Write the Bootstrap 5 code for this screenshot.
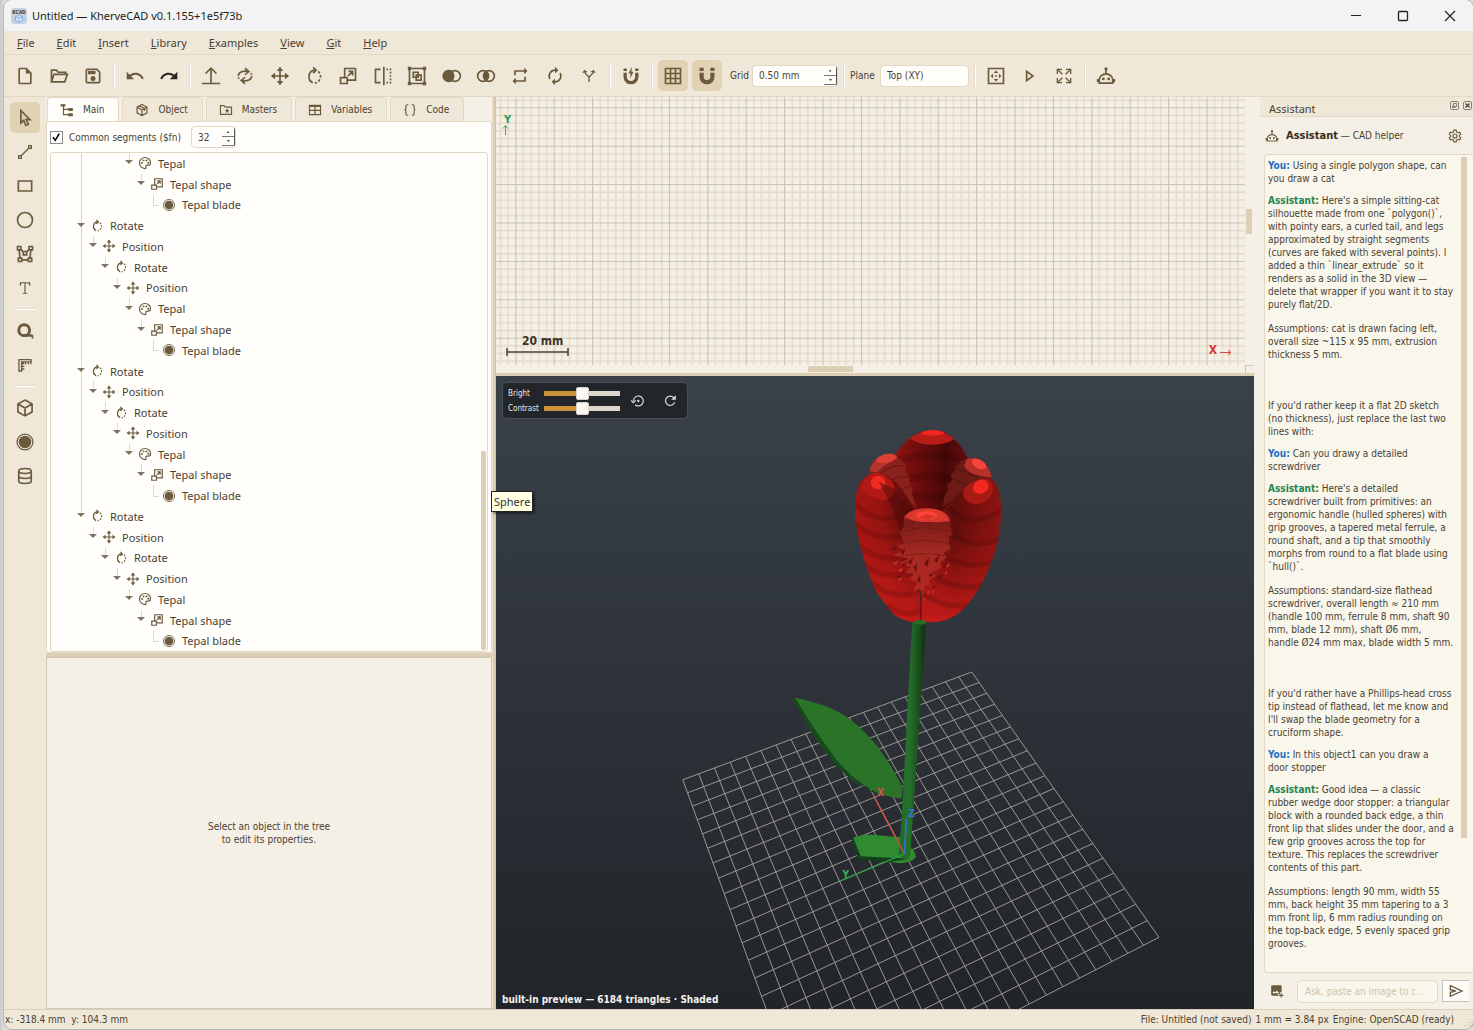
<!DOCTYPE html>
<html lang="en">
<head>
<meta charset="utf-8">
<meta name="viewport" content="width=device-width, initial-scale=1">
<title>Untitled — KherveCAD v0.1.155+1e5f73b</title>
<link href="https://cdn.jsdelivr.net/npm/bootstrap@5.3.0/dist/css/bootstrap.min.css" rel="stylesheet">
<style>
:root{--ink:#4a4132;--ico:#6b5a3c;--bar:#efe7d8;--paper:#f5f0e6;--white:#fffefa;--line:#e2d8c3;--tan:#dccfb6;--on:#e1d2b4;
--ui:"Noto Sans","Open Sans",sans-serif;--sm:"DejaVu Sans Condensed","DejaVu Sans",sans-serif}
html,body{height:100%}
body{margin:0;background:linear-gradient(90deg,#c9c9c9,#dedede 4px);font-family:var(--sm);font-size:10px;line-height:13px;color:var(--ink);overflow:hidden}
.app-win{margin-left:4px;height:calc(100vh - 1px);border-radius:8px;box-shadow:0 0 0 1px #b4b4b4;overflow:hidden;background:var(--bar)}
svg.ic{display:block;width:20px;height:20px;fill:currentColor;color:var(--ico);flex:none}
svg.ic.s14{width:14px;height:14px}
svg.ic.s16{width:16px;height:16px}
svg.ic.redo{color:#2b261c}
.ln{fill:none;stroke:currentColor;stroke-width:2}
button{border:0;background:none;padding:0;color:inherit;font:inherit}
.titlebar{height:31px;background:#f3f3f3;font-family:var(--ui);font-size:11px;color:#1d1d1d;padding:0 16px 0 7px;gap:5px}
.titlebar svg{display:block}
.winbtns{gap:33px}
.menubar{height:24px;font-family:var(--ui);font-size:11px;border-bottom:1px solid #e3d9c6;padding-left:13px;gap:22px}
.menubar a{color:var(--ink);text-decoration:none}
.toolbar{height:42px;border-bottom:1px solid var(--line);padding-left:6px}
.tb{width:30px;height:31px;border-radius:5px;display:flex;align-items:center;justify-content:center}
.tb.on{background:var(--on)}
.tsep{width:12px;height:24px;display:flex;justify-content:center}
.tsep::before{content:"";width:1px;background:#fff;border-left:1px solid #e5dccb;box-sizing:content-box}
.edit-group{width:408px}
.lb-grid{width:22px}
.lb-plane{width:30px}
.fieldbox{background:var(--white);border:1px solid var(--line);border-radius:4px;height:22px;display:flex;align-items:center;overflow:hidden;width:86px}
.fieldbox.seg{width:45px}
.fieldbox.plane{width:89px}
.fieldbox input,.fieldbox select{border:0;background:none;width:100%;min-width:0;padding:0 0 0 6px;font:inherit;color:inherit;outline:0;appearance:none}
.spin{width:13px;flex:none;display:flex;flex-direction:column;align-self:stretch;padding:1px 0;border-right:1px solid #555}
.spin button{flex:1;display:flex;align-items:center;justify-content:center;border-bottom:1px solid #777}
.spin i{width:3px;height:2px;background:#444;clip-path:polygon(50% 0,100% 100%,0 100%)}
.spin button+button i{transform:rotate(180deg)}
.rail{width:42px;padding:5px 6px;gap:3px}
.rail .hsep{height:1px;background:#fff;border-top:1px solid #e5dccb;box-sizing:content-box;margin:2px 4px}
.leftpane{width:446px;background:var(--paper)}
.doc-tabs{height:24px;gap:3px;padding-left:1px}
.doc-tabs button{background:var(--bar);border:1px solid var(--line);border-bottom:0;border-radius:4px 4px 0 0;display:flex;align-items:center;padding:0 14px 0 12px;gap:9px}
.doc-tabs button.on{background:var(--white)}
.tree-pane{flex:557 1 0;min-height:0}
.props{flex:350 1 0;min-height:0;border:1px solid #cfc8b8;background:var(--paper)}
.tabbody{background:var(--white);border:1px solid var(--line);border-radius:0 3px 3px 3px;padding:0 3px}
.segrow{height:30px;gap:6px;padding-left:0}
.segrow input[type=checkbox]{appearance:none;width:13px;height:13px;border:1px solid #8e8e8e;background:#fff url('data:image/svg+xml,<svg xmlns="http://www.w3.org/2000/svg" viewBox="0 0 13 13"><path d="M2.5 6.2 5 9.8 9.8 1.8" fill="none" stroke="black" stroke-width="1.8"/></svg>') center/11px no-repeat;margin:0}
.treebox{border:1px solid var(--line);border-radius:3px;position:relative;min-height:0}
.tree{list-style:none;margin:0;padding:0;font-family:var(--ui);font-size:11px}
.tree li{flex:1 1 0;min-height:0;display:flex;align-items:center;padding-left:calc(24px + var(--lv)*12px);position:relative}
.tree li .tw{width:12px;height:100%;flex:none;position:relative;margin-right:3px}
.tree li .tw::before{content:"";position:absolute;left:6px;top:0;bottom:50%;border-left:1px solid #d8d8da}
.tree li .tw::after{content:"";position:absolute;left:2px;top:calc(50% - 3px);border:4px solid transparent;border-top-color:#7d7466;border-bottom:0}
.tree li.leaf .tw::after{border:0;left:6px;top:50%;width:6px;border-top:1px solid #d8d8da}
.tree li::before{content:"";position:absolute;left:30px;top:0;bottom:0;border-left:1px solid #d4d4d6}
.tree li.end::before{bottom:50%}
.tree li.tail::before{display:none}
.tree svg.ic{margin-right:6px}
.tree-thumb{position:absolute;right:1px;bottom:1px;width:5px;height:40%;background:var(--tan)}
.hsplit{height:4px;background:var(--tan);flex:none}
.hsplit.thin{height:3px}
.vsplit{width:4px;background:linear-gradient(90deg,#e9dfcc 1px,var(--tan) 1px 3px,#c6b99f);flex:none}
.views{background:var(--paper)}
.v2{flex:276 1 0;min-height:0}
.v3{flex:632 1 0;min-height:0;position:relative;background:linear-gradient(#3a4149,#212429);overflow:hidden}
.canvas2d{position:relative}
.canvas2d svg.paper{position:absolute;inset:0;width:100%;height:100%}
.lab{position:absolute;font-weight:700}
.mk{position:absolute}
.mk-y{left:5px;top:27px}
.mk-s{left:10px;bottom:8px}
.mk-x{right:12px;bottom:8px}
.lab-y{left:8px;top:16px;color:#2ca04c;font-size:11px}
.lab-s{left:26px;bottom:17px;font-size:12px;color:#3a3226}
.lab-x{right:28px;bottom:8px;color:#d8363a;font-size:12px}
.vs{width:9px;padding:112px 2px 0 1px}
.vs div{height:25px;background:var(--tan)}
.hs{height:8px}
.hs .thumb{width:45px;height:6px;background:var(--tan);margin:1px 0 1px 312px}
.hs .crn{width:9px;border:1px solid #cfc8b8;border-right:0;border-bottom:0}
.scene{position:absolute;inset:0;width:100%;height:100%}
.hud{position:absolute;left:6px;top:6px;width:186px;height:37px;background:#22262b;border:1px solid #4a4f55;border-radius:5px;color:#e8e8e8;font-size:8px;padding:2px 6px 2px 5px;display:flex;align-items:center}
.hud label{width:36px}
.hud svg.ic{color:#dcdcdc}
.hud .sl{display:flex;align-items:center;height:15px}
.hud input{appearance:none;width:76px;height:5px;margin:0;background:linear-gradient(90deg,#c8913a 50%,#ddd6cb 50%);display:block}
.hud input::-webkit-slider-thumb{appearance:none;width:13px;height:13px;background:#fbf8f4;border:1px solid #d8d2c8;border-radius:2px}
.hud .btns{gap:18px;margin-right:4px}
.note3{left:6px;bottom:3px;color:#f2f2f2}
.chat{width:219px;background:var(--paper);padding-left:6px}
.dockhead{height:20px;background:var(--bar);border-bottom:1px solid var(--line);font-family:var(--ui);font-size:11px;line-height:15px;padding:4px 1px 0 9px}
.dockhead svg{display:block}
.chathead{height:37px;padding:0 11px 0 5px;gap:7px}
.chathead b{font-size:11px;color:#352d20}
.log{margin-left:4px;background:#f9f6ec;border:1px solid var(--line);border-right:0;border-radius:4px 0 0 4px;padding:4px 0 0 3px;position:relative;overflow:hidden}
.log p{margin:0 0 9px;white-space:nowrap}
.log p.cont{margin-bottom:11px}
.log p.brk{margin-bottom:38px}
.log .you{color:#1f6fc6}
.log .bot{color:#23854c}
.log-thumb{position:absolute;right:6px;top:2px;width:6px;height:681px;background:var(--tan)}
.askrow{height:36px;padding:0 4px 0 10px}
.askrow input{border:1px solid var(--line);border-radius:5px;background:#f9f6ec;height:23px;width:141px;padding:0 7px;font:inherit;outline:0}
.askrow input::placeholder{color:#cfc3a8;opacity:1}
.send{width:27px;height:22px;background:#fcfbf8;border:1px solid #c8c4bb;border-right:0;display:flex;align-items:center;justify-content:center}
.status{height:20px;border-top:1px solid #d8cfbd;padding:0 19px 0 1px;position:relative}
.status::after{content:"";position:absolute;right:1px;bottom:2px;width:9px;height:9px;background:radial-gradient(#b9b0a0 1px,transparent 1px) 0 0/3px 3px;clip-path:polygon(100% 0,100% 100%,0 100%)}
.tipbox{position:absolute;left:491px;top:491px;background:#ffffe1;border:1px solid #222;box-shadow:2px 2px 2px rgba(0,0,0,.4);font-family:var(--ui);font-size:11px;color:#333;height:21px;line-height:19px;padding:0 2px;z-index:5}
</style>
<script src="https://cdn.jsdelivr.net/npm/bootstrap@5.3.0/dist/js/bootstrap.bundle.min.js"></script>
</head>
<body>
<svg class="d-none">
<symbol id="new" viewBox="0 0 24 24"><path d="M14 2H6a2 2 0 0 0-2 2v16c0 1.100.900 2 2 2h12a2 2 0 0 0 2-2V8zM6 20V4h7v5h5v11z"/></symbol>
<symbol id="open" viewBox="0 0 24 24"><path class="ln" d="M3 19V5h6l2 2.500h9V10M3 19l3-9h16l-3 9z"/></symbol>
<symbol id="save" viewBox="0 0 24 24"><path fill-rule="evenodd" d="M17 3H5a2 2 0 0 0-2 2v14c0 1.100.900 2 2 2h14a2 2 0 0 0 2-2V7zm2 16H5V5h11.170L19 7.830zM6 6h9v4H6zM12 12a3 3 0 1 0 0 6 3 3 0 0 0 0-6z"/></symbol>
<symbol id="undo" viewBox="0 0 24 24"><path d="M12.500 8c-2.650 0-5.050.990-6.900 2.600L2 7v9h9l-3.620-3.620a8 8 0 0 1 12.720 3.620l2.370-.780C21.080 11.030 17.150 8 12.500 8z"/></symbol>
<symbol id="redo" viewBox="0 0 24 24"><path transform="matrix(-1 0 0 1 24 0)" d="M12.500 8c-2.650 0-5.050.990-6.900 2.600L2 7v9h9l-3.620-3.620a8 8 0 0 1 12.720 3.620l2.370-.780C21.080 11.030 17.150 8 12.500 8z"/></symbol>
<symbol id="extrude" viewBox="0 0 24 24"><path class="ln" d="M1 21h22M12 20V3M5.500 9 12 2.500 18.500 9"/></symbol>
<symbol id="revolve" viewBox="0 0 24 24"><path class="ln" d="M4 12C4 7.500 9 5.500 16 6.500M12 2.500l4.500 4-4.500 4M20 12c0 4.500-5 6.500-12 5.500M12 21.500l-4.500-4 4.500-4"/><path class="ln" stroke-dasharray="2 1.500" d="M4 13.500c.3 1.500 1 2.300 2.300 3M20 10.500c-.3-1.500-1-2.300-2.300-3"/></symbol>
<symbol id="move" viewBox="0 0 24 24"><path class="ln" d="M12 3v18M3 12h18"/><path d="M12 1l4 5H8zM12 23l4-5H8zM1 12l5-4v8zM23 12l-5-4v8z"/></symbol>
<symbol id="rotate" viewBox="0 0 24 24"><path class="ln" d="M10.500 20A8 8 0 0 1 12 5h2M11 1.500 14.500 5 11 8.500"/><path class="ln" stroke-dasharray="3 2.200" d="M17 6.500a8 8 0 0 1-4 14"/></symbol>
<symbol id="scale" viewBox="0 0 24 24"><path class="ln" d="M8 14V3h13v14H11M3 14h8v7H3zM12 12l5-5M12.500 6.500H17.500V11.500"/></symbol>
<symbol id="mirror" viewBox="0 0 24 24"><path class="ln" d="M9 4H3v16h6M13 1v22"/><path class="ln" stroke-dasharray="2 2" d="M16 4h5v16h-6"/></symbol>
<symbol id="group" viewBox="0 0 24 24"><path class="ln" d="M3 3h18v18H3zM7.500 7.500h6v6h-6zM11 11h6v6h-6z"/><path d="M1 1h4v4H1zM19 1h4v4h-4zM1 19h4v4H1zM19 19h4v4h-4z"/></symbol>
<symbol id="diff" viewBox="0 0 24 24"><path d="M8.500 4.500C10 4.500 11 5 12 5.700a8 8 0 0 0 0 12.600 7.500 7.500 0 1 1-3.500-13.800z"/><path d="M12 5.700a8 8 0 0 1 0 12.600 8 8 0 0 1 0-12.600z"/><circle class="ln" cx="15.500" cy="12" r="6.500"/></symbol>
<symbol id="inter" viewBox="0 0 24 24"><circle class="ln" cx="8.500" cy="12" r="6.500"/><circle class="ln" cx="15.500" cy="12" r="6.500"/><path d="M12 6a7 7 0 0 1 0 12 7 7 0 0 1 0-12z"/></symbol>
<symbol id="loop" viewBox="0 0 24 24"><path d="M7 7h10v3l4-4-4-4v3H5v6h2zM17 17H7v-3l-4 4 4 4v-3h12v-6h-2z"/></symbol>
<symbol id="renew" viewBox="0 0 24 24"><path d="M12 6v3l4-4-4-4v3a8 8 0 0 0-6.760 12.260L6.700 14.800A6 6 0 0 1 12 6zm6.760 1.740L17.300 9.200A6 6 0 0 1 12 18v-3l-4 4 4 4v-3a8 8 0 0 0 6.760-12.260z"/></symbol>
<symbol id="split" viewBox="0 0 24 24"><path class="ln" d="M12 21v-6.500c0-2-6.500-6-6.500-9M12 14.500c0-2 6.500-6 6.500-9"/><path d="M2 7.500 5 2.500l5 3.500zM22 7.500l-3-5-5 3.500z"/></symbol>
<symbol id="magnet" viewBox="0 0 24 24"><path d="M3 8h5v5a4 4 0 0 0 8 0V8h5v5a9 9 0 0 1-18 0zM3 2h5v4H3zM16 2h5v4h-5z"/></symbol>
<symbol id="bolt" viewBox="0 0 24 24"><path d="M3 8h4v5a5 5 0 0 0 10 0V8h4v5a9 9 0 0 1-18 0zM3 3h4v3H3zM17 3h4v3h-4zM13 1 9 9h2.500L11 15l4-8h-2.500z"/></symbol>
<symbol id="grid" viewBox="0 0 24 24"><path class="ln" d="M3 3h18v18H3zM9 3v18M15 3v18M3 9h18M3 15h18"/></symbol>
<symbol id="fit" viewBox="0 0 24 24"><path class="ln" d="M3 3h18v18H3z"/><path d="M12 5.500l2.800 3H9.200zM12 18.500l2.800-3H9.200zM5.500 12l3-2.800v5.600zM18.500 12l-3-2.800v5.600zM11 11h2v2h-2z"/></symbol>
<symbol id="play" viewBox="0 0 24 24"><path class="ln" d="M8 6.500v11l7.500-5.500z"/></symbol>
<symbol id="full" viewBox="0 0 24 24"><path class="ln" stroke-width="2.400" d="M2 9V2h7M2 2l7.500 7.500M15 2h7v7M22 2l-7.500 7.500M2 15v7h7M2 22l7.500-7.500M22 15v7h-7M22 22l-7.500-7.500"/></symbol>
<symbol id="robot" viewBox="0 0 24 24"><path class="ln" d="M4 20.500v-4a8 7 0 0 1 16 0v4zM12 9V5M2 15.500v4M22 15.500v4"/><circle cx="12" cy="3.500" r="2"/><circle cx="8.800" cy="15.500" r="1.700"/><circle cx="15.200" cy="15.500" r="1.700"/></symbol>
<symbol id="cursor" viewBox="0 0 24 24"><path class="ln" d="M7 3v15l3.500-3 2.500 6 3-1.300-2.600-5.700H18z"/></symbol>
<symbol id="line" viewBox="0 0 24 24"><path class="ln" d="M2.500 17.500h4v4h-4zM17.500 2.500h4v4h-4zM7 17 17 7"/></symbol>
<symbol id="rect" viewBox="0 0 24 24"><path class="ln" d="M4 6h16v12H4z"/></symbol>
<symbol id="circ" viewBox="0 0 24 24"><circle class="ln" cx="12" cy="12" r="9"/></symbol>
<symbol id="poly" viewBox="0 0 24 24"><path class="ln" d="M3 3h4v4H3zM17 3h4v4h-4zM4 17h4v4H4zM16 17h4v4h-4zM10 9h4v4h-4zM5 7l1 10M19 7l-1 10M8 19h8M7 6l3 4M17 6l-3 4"/></symbol>
<symbol id="txt" viewBox="0 0 24 24"><path d="M3 2h18v6h-1.500L18 4h-5v16l3 .500V22H8v-1.500l3-.5V4H6L4.500 8H3z"/></symbol>
<symbol id="tape" viewBox="0 0 24 24"><circle cx="11" cy="11" r="6.500" fill="none" stroke="currentColor" stroke-width="3.500"/><path d="M7 16h14v1h1v4h-2v-2H9z"/></symbol>
<symbol id="ruler" viewBox="0 0 24 24"><path d="M2 3h20v8h-2V8h-2v3h-2V8h-2v3h-2V8h-1v3H8v2h3v2H8v2h3v2H8v3H2z"/><path fill="#efe7d8" d="M4 5h16v1.200H6V20H4z"/></symbol>
<symbol id="cube" viewBox="0 0 24 24"><path class="ln" d="M12 2.500l8.500 4.700v9.600L12 21.500l-8.500-4.700V7.200zM3.500 7.200 12 12l8.500-4.800M12 12v9.500"/></symbol>
<symbol id="box" viewBox="0 0 24 24"><path class="ln" d="M12 2.500l8.500 4.700v9.600L12 21.500l-8.500-4.700V7.200zM3.500 7.200 12 12l8.500-4.800M12 12v9.500M8 5l8.500 4.700v4"/></symbol>
<symbol id="sphere" viewBox="0 0 24 24"><circle cx="12" cy="12" r="7.500"/><circle cx="12" cy="12" r="9.500" fill="none" stroke="currentColor" stroke-width="1.500"/></symbol>
<symbol id="cyl" viewBox="0 0 24 24"><ellipse class="ln" cx="12" cy="6" rx="7.500" ry="3"/><path class="ln" d="M4.500 6v12c0 4 15 4 15 0V6M4.500 12c0 4 15 4 15 0"/></symbol>
<symbol id="palette" viewBox="0 0 24 24"><path class="ln" d="M12 2.500a9.500 9.500 0 0 0 0 19c2 0 2.300-1.500 1.500-2.700-.8-1.500 0-3.300 2-3.300h2.500c2 0 3.500-1.500 3.500-4 0-5-4.200-9-9.500-9z"/><circle cx="6.800" cy="12" r="1.700"/><circle cx="9.500" cy="7.500" r="1.700"/><circle cx="14.500" cy="7.500" r="1.700"/><circle cx="17.500" cy="11.500" r="1.700"/></symbol>
<symbol id="treei" viewBox="0 0 24 24"><path class="ln" d="M2 4h7M6 4v16h8M6 11h8"/><path d="M1 2h8v4H1zM14 8.500h8v5h-8zM14 17.500h8v5h-8z"/></symbol>
<symbol id="star" viewBox="0 0 24 24"><path class="ln" d="M2.500 19.500v-15h6l2.500 2.500h10.500v12.500z"/><path d="M14 9l1.300 3H18l-2.200 2 .8 3-2.600-1.600L11.400 17l.8-3L10 12h2.700z"/></symbol>
<symbol id="table" viewBox="0 0 24 24"><path class="ln" d="M2.500 4h19v16h-19zM2.500 6h19M2.500 12.500h19M12 5v15"/></symbol>
<symbol id="braces" viewBox="0 0 24 24"><path class="ln" d="M9 3H7Q5 3 5 5v4.500Q5 12 2.500 12 5 12 5 14.500V19q0 2 2 2h2M15 3h2q2 0 2 2v4.500q0 2.500 2.500 2.500-2.500 0-2.500 2.500V19q0 2-2 2h-2"/></symbol>
<symbol id="gear" viewBox="0 0 24 24"><path class="ln" d="M10 2h4l.7 3 2.200 1.300 3-.9 2 3.500-2.300 2.100v2l2.300 2.100-2 3.500-3-.9-2.200 1.300-.7 3h-4l-.7-3-2.200-1.300-3 .9-2-3.500L4.400 13v-2L2.100 8.900l2-3.500 3 .9L9.300 5z"/><circle class="ln" cx="12" cy="12" r="3.500"/></symbol>
<symbol id="img" viewBox="0 0 24 24"><path fill-rule="evenodd" d="M4 2h14q2 0 2 2v10h-3v3h-3v3H4q-2 0-2-2V4q0-2 2-2zM4 16h12l-4-5-3 3.500-2-2.300zM18 16h2v2.500h3v2h-3V23h-2v-2.500h-3v-2h3z"/></symbol>
<symbol id="sendi" viewBox="0 0 24 24"><path class="ln" d="M3.500 4 21 12 3.500 20V14l8-2-8-2z"/></symbol>
<symbol id="rst" viewBox="0 0 24 24"><path class="ln" d="M4 12a8.500 8.500 0 1 1 3 6.500M0 11l4 4 4-4"/><circle cx="12.500" cy="12" r="2"/></symbol>
<symbol id="rld" viewBox="0 0 24 24"><path class="ln" d="M20 14a8 8 0 1 1-2-8l2 2"/><path d="M22 2v8h-8z"/></symbol>
</svg>

<div class="app-win d-flex flex-column">
<header class="titlebar d-flex align-items-center flex-shrink-0">
<svg width="16" height="16" viewBox="0 0 16 16"><rect width="16" height="16" rx="3" fill="#c6d2e0"/><text x="8" y="5.500" font-size="5" font-weight="700" text-anchor="middle" fill="#333">KCAD</text><path d="M8 7l3.500 1.800v3.600L8 14.500l-3.500-2.100V8.800zM4.500 8.800 8 10.500l3.500-1.700M8 10.500v4" fill="#dcecff" stroke="#6ea3dc" stroke-width=".8"/></svg>
<span>Untitled — KherveCAD v0.1.155+1e5f73b</span>
<div class="ms-auto d-flex winbtns">
<button aria-label="Minimize"><svg width="14" height="14"><path d="M2 6.500h10" stroke="#222"/></svg></button>
<button aria-label="Maximize"><svg width="14" height="14"><rect x="2.500" y="2.500" width="9" height="9" rx="1" fill="none" stroke="#222" stroke-width="1.300"/></svg></button>
<button aria-label="Close"><svg width="14" height="14"><path d="M2 2l10 10M12 2 2 12" stroke="#222" stroke-width="1.200"/></svg></button>
</div>
</header>
<nav class="menubar d-flex align-items-center flex-shrink-0">
<a href="#"><u>F</u>ile</a><a href="#"><u>E</u>dit</a><a href="#"><u>I</u>nsert</a><a href="#"><u>L</u>ibrary</a><a href="#"><u>E</u>xamples</a><a href="#"><u>V</u>iew</a><a href="#"><u>G</u>it</a><a href="#"><u>H</u>elp</a>
</nav>
<div class="toolbar d-flex align-items-center flex-shrink-0">
<div class="d-flex gap-1">
<button class="tb" aria-label="New"><svg class="ic"><use href="#new"/></svg></button>
<button class="tb" aria-label="Open"><svg class="ic"><use href="#open"/></svg></button>
<button class="tb" aria-label="Save"><svg class="ic"><use href="#save"/></svg></button>
</div><span class="tsep"></span>
<div class="d-flex gap-1">
<button class="tb" aria-label="Undo"><svg class="ic"><use href="#undo"/></svg></button>
<button class="tb" aria-label="Redo"><svg class="ic redo"><use href="#redo"/></svg></button>
</div><span class="tsep"></span>
<div class="edit-group d-flex justify-content-between">
<button class="tb" aria-label="Extrude"><svg class="ic"><use href="#extrude"/></svg></button>
<button class="tb" aria-label="Revolve"><svg class="ic"><use href="#revolve"/></svg></button>
<button class="tb" aria-label="Move"><svg class="ic"><use href="#move"/></svg></button>
<button class="tb" aria-label="Rotate"><svg class="ic"><use href="#rotate"/></svg></button>
<button class="tb" aria-label="Scale"><svg class="ic"><use href="#scale"/></svg></button>
<button class="tb" aria-label="Mirror"><svg class="ic"><use href="#mirror"/></svg></button>
<button class="tb" aria-label="Group"><svg class="ic"><use href="#group"/></svg></button>
<button class="tb" aria-label="Difference"><svg class="ic"><use href="#diff"/></svg></button>
<button class="tb" aria-label="Intersection"><svg class="ic"><use href="#inter"/></svg></button>
<button class="tb" aria-label="Loop"><svg class="ic"><use href="#loop"/></svg></button>
<button class="tb" aria-label="Refresh"><svg class="ic"><use href="#renew"/></svg></button>
<button class="tb" aria-label="Branch"><svg class="ic s16"><use href="#split"/></svg></button>
</div><span class="tsep"></span>
<button class="tb" aria-label="Quick snap"><svg class="ic"><use href="#bolt"/></svg></button>
<span class="tsep"></span>
<div class="d-flex gap-1">
<button class="tb on" aria-label="Show grid"><svg class="ic"><use href="#grid"/></svg></button>
<button class="tb on" aria-label="Snap to grid"><svg class="ic"><use href="#magnet"/></svg></button>
</div>
<label for="gridsize" class="lb-grid ms-2">Grid</label>
<div class="fieldbox"><input id="gridsize" type="text" value="0.50 mm"><div class="spin"><button aria-label="Increase grid"><i></i></button><button aria-label="Decrease grid"><i></i></button></div></div>
<span class="tsep"></span>
<label for="plane" class="lb-plane">Plane</label>
<div class="fieldbox plane"><select id="plane"><option>Top (XY)</option><option>Front (XZ)</option></select></div>
<span class="tsep"></span>
<div class="d-flex gap-1">
<button class="tb" aria-label="Fit"><svg class="ic"><use href="#fit"/></svg></button>
<button class="tb" aria-label="Run"><svg class="ic"><use href="#play"/></svg></button>
<button class="tb" aria-label="Fullscreen"><svg class="ic s16"><use href="#full"/></svg></button>
</div><span class="tsep"></span>
<button class="tb" aria-label="Assistant"><svg class="ic"><use href="#robot"/></svg></button>
</div>

<main class="d-flex flex-fill overflow-hidden">
<aside class="rail d-flex flex-column flex-shrink-0">
<button class="tb on" aria-label="Select"><svg class="ic"><use href="#cursor"/></svg></button>
<button class="tb" aria-label="Line"><svg class="ic s16"><use href="#line"/></svg></button>
<button class="tb" aria-label="Rectangle"><svg class="ic"><use href="#rect"/></svg></button>
<button class="tb" aria-label="Circle"><svg class="ic"><use href="#circ"/></svg></button>
<button class="tb" aria-label="Polygon"><svg class="ic"><use href="#poly"/></svg></button>
<button class="tb" aria-label="Text"><svg class="ic s14"><use href="#txt"/></svg></button>
<div class="hsep"></div>
<button class="tb" aria-label="Measure"><svg class="ic"><use href="#tape"/></svg></button>
<button class="tb" aria-label="Ruler"><svg class="ic s16"><use href="#ruler"/></svg></button>
<div class="hsep"></div>
<button class="tb" aria-label="Cube"><svg class="ic"><use href="#cube"/></svg></button>
<button class="tb" aria-label="Sphere"><svg class="ic"><use href="#sphere"/></svg></button>
<button class="tb" aria-label="Cylinder"><svg class="ic"><use href="#cyl"/></svg></button>
</aside>

<section class="leftpane d-flex flex-column flex-shrink-0">
<div class="tree-pane d-flex flex-column">
<div class="doc-tabs d-flex flex-shrink-0">
<button class="on"><svg class="ic s14"><use href="#treei"/></svg>Main</button>
<button><svg class="ic s14"><use href="#box"/></svg>Object</button>
<button><svg class="ic s14"><use href="#star"/></svg>Masters</button>
<button><svg class="ic s14"><use href="#table"/></svg>Variables</button>
<button><svg class="ic s14"><use href="#braces"/></svg>Code</button>
</div>
<div class="tabbody d-flex flex-column flex-fill overflow-hidden">
<div class="segrow d-flex align-items-center flex-shrink-0">
<input type="checkbox" id="fn" checked><label for="fn" class="me-1">Common segments ($fn)</label>
<div class="fieldbox seg"><input type="text" value="32" aria-label="Segments"><div class="spin"><button aria-label="More"><i></i></button><button aria-label="Fewer"><i></i></button></div></div>
</div>
<div class="treebox flex-fill d-flex">
<ul class="tree d-flex flex-column flex-fill" id="tree"></ul>
<div class="tree-thumb"></div>
</div>
</div>
</div>
<div class="hsplit"></div>
<div class="props d-flex align-items-center justify-content-center text-center">Select an object in the tree<br>to edit its properties.</div>
</section>
<div class="vsplit"></div>

<section class="views d-flex flex-column flex-fill overflow-hidden">
<div class="v2 d-flex flex-column">
<div class="d-flex flex-fill">
<div class="canvas2d flex-fill">
<svg class="paper">
<defs><pattern id="gp" width="38.400" height="38.400" x="19.300" y="10.300" patternUnits="userSpaceOnUse">
<path d="M8.180 0v38.400M15.860 0v38.400M23.540 0v38.400M31.220 0v38.400M0 8.180h38.400M0 15.860h38.400M0 23.540h38.400M0 31.220h38.400" stroke="#e4d9c7" stroke-width="1.400"/>
<path d="M.500 0v38.400M0 .500h38.400" stroke="#c8c2b2" stroke-width="1.200"/></pattern></defs>
<rect width="100%" height="100%" fill="url(#gp)"/></svg>
<span class="lab lab-y">Y</span>
<svg class="mk mk-y" width="10" height="12"><path d="M4.500 11V2M2 4.500 4.500 1.500 7 4.500" fill="none" stroke="#3fae60"/></svg>
<span class="lab lab-s">20 mm</span>
<svg class="mk mk-s" width="63" height="10"><path d="M1 5h61M1 1v8M62 1v8" fill="none" stroke="#4a4132" stroke-width="1.500"/></svg>
<span class="lab lab-x">X</span>
<svg class="mk mk-x" width="14" height="10"><path d="M1 5.500h11M9 3 12 5.500 9 8" fill="none" stroke="#d8464a"/></svg>
</div>
<div class="vs flex-shrink-0"><div></div></div>
</div>
<div class="hs d-flex justify-content-between flex-shrink-0"><div class="thumb"></div><div class="crn"></div></div>
</div>
<div class="hsplit thin"></div>
<div class="v3">
<svg class="scene" viewBox="496 376 758 632" preserveAspectRatio="xMidYMid slice">
<defs>
<linearGradient id="stemg"><stop offset="0" stop-color="#1f6a26"/><stop offset=".4" stop-color="#25702a"/><stop offset=".75" stop-color="#1b4f1d"/><stop offset="1" stop-color="#0e2e10"/></linearGradient>
<linearGradient id="backg" x1="345" x2="562" y1="0" y2="0" gradientUnits="userSpaceOnUse"><stop offset="0" stop-color="#8c1512"/><stop offset=".35" stop-color="#6a0d0c"/><stop offset=".7" stop-color="#470807"/><stop offset="1" stop-color="#651010"/></linearGradient>
<linearGradient id="lg" x1="228" x2="425" y1="300" y2="270" gradientUnits="userSpaceOnUse"><stop offset="0" stop-color="#a81612"/><stop offset=".4" stop-color="#941411"/><stop offset=".75" stop-color="#650e0c"/><stop offset="1" stop-color="#4c0a09"/></linearGradient>
<linearGradient id="rg" x1="450" x2="665" y1="330" y2="330" gradientUnits="userSpaceOnUse"><stop offset="0" stop-color="#7c1210"/><stop offset=".35" stop-color="#600d0c"/><stop offset=".75" stop-color="#80110f"/><stop offset="1" stop-color="#8c1512"/></linearGradient>
<linearGradient id="low" x1="0" x2="0" y1="330" y2="610" gradientUnits="userSpaceOnUse"><stop offset="0" stop-color="#c01a16" stop-opacity="0"/><stop offset="1" stop-color="#c81c18" stop-opacity=".95"/></linearGradient>
<linearGradient id="cg" x1="0" x2="0" y1="265" y2="520" gradientUnits="userSpaceOnUse"><stop offset="0" stop-color="#d8322a"/><stop offset=".16" stop-color="#7e1d18"/><stop offset=".5" stop-color="#a52a22"/><stop offset="1" stop-color="#b82a22"/></linearGradient>
<clipPath id="cl"><path id="pl" d="M226 240C230 190 255 158 290 157 340 162 372 210 402 268L425 602C400 612 370 600 345 585 322 560 300 530 290 515 255 440 218 320 226 240z"/></clipPath>
<clipPath id="cr"><path id="pr" d="M635 176C656 195 664 230 663 280 660 380 620 480 565 550 530 595 480 614 425 603L415 300 490 270C530 220 570 185 600 175z"/></clipPath>
<clipPath id="cb"><path id="pb" d="M340 110C370 62 410 30 460 30 510 32 545 75 566 120L540 200 490 275 400 275 360 180z"/></clipPath>
</defs>
<g id="floor" stroke="#a8a398" stroke-width=".9" fill="none"></g>
<g transform="translate(670 640) scale(.333333)">
<path fill="#174a1a" d="M367 173L376 172 430 260 520 385 600 452 640 468 560 430 500 380 430 285z"/>
<path fill="#2a7329" d="M375 172C440 185 500 205 545 240 620 300 660 370 698 440L694 474C660 468 640 466 618 455 560 425 520 385 490 345 450 290 410 230 375 172z"/>
<path fill="#12401a" d="M545 596L553 592 576 645 720 655 690 668 565 656z"/>
<path fill="#2f8a31" d="M550 592Q560 584 600 582L690 590 722 622Q738 635 737 650 725 666 690 668L660 664 720 655 572 647z"/>
<path fill="url(#stemg)" d="M727 -62L767 -62 765 0 721 640Q720 654 706 656 690 652 685 640L693 560z"/>
<path d="M703 640L613 471" stroke="#d84a3c" stroke-width="4"/><path d="M703 640L709 535" stroke="#3a6fd0" stroke-width="5"/><path d="M703 640L510 722" stroke="#2f9a45" stroke-width="4"/>
<g font-family="DejaVu Sans Condensed,DejaVu Sans" font-weight="700" font-size="30"><text x="621" y="467" fill="#e04a44">X</text><text x="715" y="529" fill="#3a6fe0">Z</text><text x="518" y="713" fill="#3fae58">Y</text></g>
</g>
<g transform="translate(780 420) scale(.333333)" stroke="none">
<use href="#pb" fill="url(#backg)"/>
<g clip-path="url(#cb)"><ellipse cx="457" cy="38" rx="76" ry="36" fill="#b81c18"/><ellipse cx="458" cy="38" rx="34" ry="9" fill="#ee2820"/>
<g fill="none" stroke="#200303" stroke-opacity=".16" stroke-width="24"><path d="M350 120Q450 95 560 120M360 178Q450 160 545 182M370 232Q450 222 520 236"/></g></g>
<path fill="#8a211c" d="M266 156C275 120 300 102 325 101L350 108 365 122 378 135 376 150 390 175 386 185 398 205 395 220 402 240 410 262 370 230 330 170 290 158z"/>
<path fill="#b5332c" d="M268 152C280 118 300 104 325 101L350 108 352 116C320 130 300 145 290 158z"/><ellipse cx="319" cy="115" rx="31" ry="13" fill="#dc4036" transform="rotate(-12 319 115)"/>
<path d="M300 160Q340 130 376 138M330 182Q360 165 386 172M355 215Q380 195 398 200" stroke="#5e1411" fill="none" stroke-width="2.500"/>
<path fill="#6d1a16" d="M560 116L545 122 530 135 526 150 512 165 516 180 500 195 505 210 492 228 488 262 530 225 600 178 634 178 632 160 590 112z"/>
<path fill="#b83129" d="M560 116C580 110 600 116 615 130 625 142 632 155 634 172 600 170 560 160 552 138z"/><ellipse cx="597" cy="132" rx="23" ry="13" fill="#f8443a" transform="rotate(28 597 132)"/>
<path d="M530 145Q575 160 600 178M515 175Q545 185 560 195" stroke="#48100e" fill="none" stroke-width="2.500"/>
<use href="#pr" fill="url(#rg)"/><use href="#pr" fill="url(#low)"/>
<g clip-path="url(#cr)"><g fill="none" stroke="#200303" stroke-opacity=".17" stroke-width="17"><path d="M505 262Q570 335 668 268M490 328Q580 398 668 350M470 398Q570 460 660 415M440 460Q550 525 640 484M430 522Q510 575 600 550"/></g>
<ellipse cx="594" cy="212" rx="46" ry="38" fill="#a81a15" transform="rotate(-25 594 212)"/><ellipse cx="602" cy="200" rx="24" ry="20" fill="#f5281f" transform="rotate(-25 602 200)"/></g>
<use href="#pl" fill="url(#lg)"/><use href="#pl" fill="url(#low)"/>
<g clip-path="url(#cl)"><g fill="none" stroke="#200303" stroke-opacity=".15" stroke-width="17"><path d="M222 248Q290 325 385 275M222 308Q300 378 400 335M228 372Q310 440 410 400M245 428Q320 490 420 450M275 488Q350 548 422 508M320 555Q370 595 425 570"/></g>
<path fill="#b21914" d="M243 205C250 170 270 157 290 157 320 160 340 185 344 205 345 230 320 244 295 238 265 230 250 220 243 205z"/><ellipse cx="294" cy="187" rx="22" ry="20" fill="#ef2a22"/><path fill="#4c0a09" fill-opacity=".5" d="M296 185L340 205Q372 250 400 270L402 340 360 330Q340 260 296 185z"/></g>
<path fill="url(#cg)" fill-opacity=".92" d="M372 290C390 264 430 264 450 265 490 268 508 285 512 300L510 318 518 345 505 365 512 385 490 398 500 412 478 430 486 440 462 455 468 468 445 480 450 492 432 498 425 530 420 505 398 518 412 488 388 478 402 460 375 458 392 440 360 430 385 415 335 405 372 392 350 378 372 368 360 340 370 320z"/>
<path fill="#db392f" d="M374 290C390 266 430 264 450 265 480 267 505 282 508 304 490 300 480 310 445 305 410 308 395 300 374 290z"/><ellipse cx="440" cy="286" rx="32" ry="13" fill="#ff4338"/><path fill="#d8342a" d="M412 290L440 282 470 290 440 299z"/>
<path d="M370 335Q435 310 515 335M368 370Q435 350 512 372M375 405Q435 395 500 408" stroke="#5e1511" stroke-opacity=".6" fill="none" stroke-width="2.500"/>
<path fill="#6d110e" d="M350 350l12-8-6 22zM334 385l20-8-12 16zM362 395l14-12-6 22zM384 425l16-14-8 24zM365 432l16-8-10 16zM350 470l18-6-10 12zM400 440l12-10-4 26zM432 430l16-20-6 30zM462 420l18-18-10 26zM486 440l16-14-8 18zM445 465l20-12-12 18zM470 470l20-10-10 16zM410 480l10-14 2 24zM505 350l14-8-6 24zM512 395l12-10-4 16zM455 500l16-6-10 10z"/>
<path fill="#c4322a" d="M338 430l16-10-6 14zM352 450l18-8-8 14zM352 478l16-10-8 14zM440 520l8-12-1 14zM455 516l8-8-2 12zM400 545l6-6-2 8zM428 540l5-10 2 12zM492 462l8-12 0 12zM498 440l10-14-2 14z"/>
<path d="M424 510L421 600" stroke="#4a0a09" stroke-width="4" stroke-opacity=".6"/>
<ellipse cx="420" cy="606" rx="19" ry="7" fill="#2a6e2b"/>
</g>
</svg>
<div class="hud">
<div>
<div class="sl"><label for="br">Bright</label><input id="br" type="range"></div>
<div class="sl"><label for="co">Contrast</label><input id="co" type="range"></div>
</div>
<div class="btns d-flex ms-auto">
<button aria-label="Reset view"><svg class="ic s14"><use href="#rst"/></svg></button>
<button aria-label="Reload"><svg class="ic s14"><use href="#rld"/></svg></button>
</div>
</div>
<div class="lab note3">built-in preview — 6184 triangles · Shaded</div>
</div>
</section>

<aside class="chat d-flex flex-column flex-shrink-0">
<div class="dockhead d-flex justify-content-between flex-shrink-0"><span>Assistant</span>
<div class="d-flex align-items-start">
<button class="me-1" aria-label="Float"><svg width="9" height="9"><rect x=".500" y=".500" width="8" height="8" rx="1.500" fill="none" stroke="#8a8478"/><path d="M3.500 2.500h3v3h-3zM2.500 4.500v2h3" fill="none" stroke="#6b6558" stroke-width=".800"/></svg></button>
<button aria-label="Close dock"><svg width="9" height="9"><rect x=".500" y=".500" width="8" height="8" rx="1.500" fill="none" stroke="#8a8478"/><path d="M2.500 2.500l4 4M6.500 2.500l-4 4" stroke="#444" stroke-width="1.300"/></svg></button>
</div></div>
<div class="chathead d-flex align-items-center flex-shrink-0"><svg class="ic s14"><use href="#robot"/></svg><span><b>Assistant</b> — CAD helper</span><button class="ms-auto" aria-label="Settings"><svg class="ic s14"><use href="#gear"/></svg></button></div>
<div class="log flex-fill">
<p><b class="you">You:</b> Using a single polygon shape, can<br>you draw a cat</p>
<p class="cont"><b class="bot">Assistant:</b> Here's a simple sitting-cat<br>silhouette made from one `polygon()`,<br>with pointy ears, a curled tail, and legs<br>approximated by straight segments<br>(curves are faked with several points). I<br>added a thin `linear_extrude` so it<br>renders as a solid in the 3D view —<br>delete that wrapper if you want it to stay<br>purely flat/2D.</p>
<p class="brk">Assumptions: cat is drawn facing left,<br>overall size ~115 x 95 mm, extrusion<br>thickness 5 mm.</p>
<p>If you'd rather keep it a flat 2D sketch<br>(no thickness), just replace the last two<br>lines with:</p>
<p><b class="you">You:</b> Can you drawy a detailed<br>screwdriver</p>
<p class="cont"><b class="bot">Assistant:</b> Here's a detailed<br>screwdriver built from primitives: an<br>ergonomic handle (hulled spheres) with<br>grip grooves, a tapered metal ferrule, a<br>round shaft, and a tip that smoothly<br>morphs from round to a flat blade using<br>`hull()`.</p>
<p class="brk">Assumptions: standard-size flathead<br>screwdriver, overall length ≈ 210 mm<br>(handle 100 mm, ferrule 8 mm, shaft 90<br>mm, blade 12 mm), shaft Ø6 mm,<br>handle Ø24 mm max, blade width 5 mm.</p>
<p>If you'd rather have a Phillips-head cross<br>tip instead of flathead, let me know and<br>I'll swap the blade geometry for a<br>cruciform shape.</p>
<p><b class="you">You:</b> In this object1 can you draw a<br>door stopper</p>
<p class="cont"><b class="bot">Assistant:</b> Good idea — a classic<br>rubber wedge door stopper: a triangular<br>block with a rounded back edge, a thin<br>front lip that slides under the door, and a<br>few grip grooves across the top for<br>texture. This replaces the screwdriver<br>contents of this part.</p>
<p>Assumptions: length 90 mm, width 55<br>mm, back height 35 mm tapering to a 3<br>mm front lip, 6 mm radius rounding on<br>the top-back edge, 5 evenly spaced grip<br>grooves.</p>
<div class="log-thumb"></div>
</div>
<div class="askrow d-flex align-items-center justify-content-between flex-shrink-0">
<button aria-label="Attach image"><svg class="ic s14"><use href="#img"/></svg></button>
<div class="d-flex gap-1 align-items-center"><input type="text" aria-label="Message" placeholder="Ask, paste an image to r...">
<button class="send" aria-label="Send"><svg class="ic s16"><use href="#sendi"/></svg></button></div>
</div>
</aside>
</main>
<footer class="status d-flex align-items-center flex-shrink-0"><span>x: -318.4 mm&nbsp; y: 104.3 mm</span><div class="ms-auto d-flex gap-1"><span>File: Untitled (not saved)</span><span>1 mm = 3.84 px</span><span>Engine: OpenSCAD (ready)</span></div></footer>
</div>
<div class="tipbox" role="tooltip">Sphere</div>
<script>
// Object tree: each flower petal is the same chain of nested operations.
const chain=[["Rotate","rotate"],["Position","move"],["Rotate","rotate"],["Position","move"],["Tepal","palette"],["Tepal shape","scale"],["Tepal blade","sphere"]];
const rows=[];
for(let p=0;p<4;p++)chain.forEach((c,i)=>{if(p>0||i>3)rows.push({n:c[0],ic:c[1],lv:i,cls:(i===6?"leaf ":"")+(p===3?(i===0?"end":"tail"):"")})});
document.getElementById("tree").innerHTML=rows.map(r=>`<li class="${r.cls}" style="--lv:${r.lv}"><span class="tw"></span><svg class="ic s14"><use href="#${r.ic}"/></svg>${r.n}</li>`).join("");
// Ground plane: 20 by 20 cells under a perspective projection.
const P=(u,v)=>{const w=1+.1125*u-.241*v;return [670+(39+967.8*u+270.8*v)/w/3,640+(418-312.3*u+670*v)/w/3].map(n=>n.toFixed(2)).join(" ")};
let d="";
for(let i=0;i<=20;i++){d+=`M${P(i/20,0)}L${P(i/20,1)}M${P(0,i/20)}L${P(1,i/20)}`}
document.getElementById("floor").innerHTML=`<path d="${d}"/>`;
</script>
</body>
</html>
